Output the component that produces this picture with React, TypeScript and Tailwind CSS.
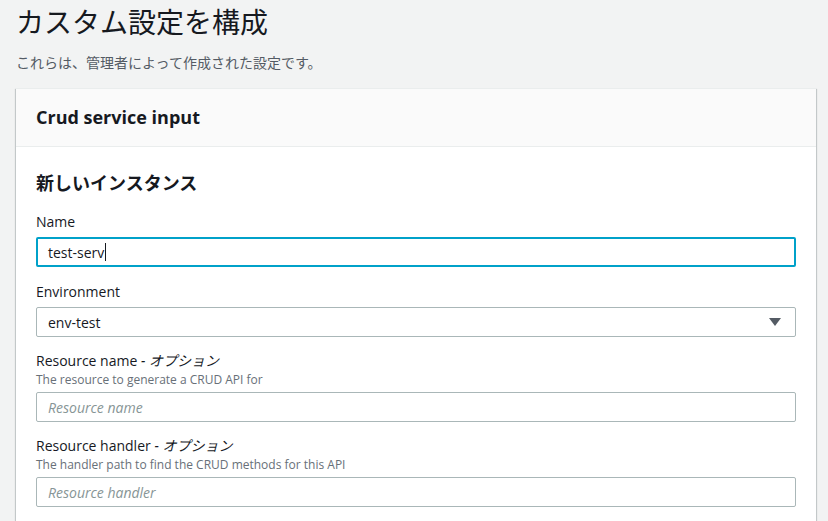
import React from 'react';

const font = { fontFamily: '"Open Sans", "Noto Sans CJK JP", sans-serif' };

function Field({
  label,
  optional,
  description,
  children,
}: {
  label: string;
  optional?: boolean;
  description?: string;
  children: React.ReactNode;
}) {
  return (
    <div className="flex flex-col">
      <label className="text-[14px] leading-[22px] text-[#16191f]">
        {label}
        {optional && <span className="italic"> - オプション</span>}
      </label>
      {description && <p className="text-[12px] leading-[16px] text-[#687078]">{description}</p>}
      <div className="mt-[4px]">{children}</div>
    </div>
  );
}

export default function App() {
  return (
    <div className="min-h-screen bg-[#f2f3f3] px-[16px] pt-[2px] text-[#16191f]" style={font}>
      <h1 className="text-[28px] leading-[40px] font-normal">カスタム設定を構成</h1>
      <p className="mt-[10px] text-[14px] leading-[22px] text-[#545b64]">これらは、管理者によって作成された設定です。</p>
      <div className="mt-[14px] w-[800px] border-t border-[#eaeded] bg-white shadow-[0_1px_1px_0_rgba(0,28,36,0.3),1px_1px_1px_0_rgba(0,28,36,0.15),-1px_1px_1px_0_rgba(0,28,36,0.15)]">
        <div className="flex h-[58px] items-center border-b border-[#eaeded] bg-[#fafafa] px-[20px]">
          <h2 className="text-[18px] font-bold">Crud service input</h2>
        </div>
        <div className="flex flex-col px-[20px] pt-[22px] pb-[20px]">
          <h3 className="mb-[14px] text-[18px] leading-[28px] font-bold">新しいインスタンス</h3>
          <div className="flex flex-col gap-[13px]">
            <div className="pb-[1px]">
              <Field label="Name">
                <div className="flex h-[30px] items-center rounded-[2px] border-2 border-[#00a1c9] px-[10px] text-[14px]">
                  test-serv<span className="ml-px inline-block h-[18px] w-px bg-[#16191f]" />
                </div>
              </Field>
            </div>
            <Field label="Environment">
              <div className="flex h-[30px] items-center justify-between rounded-[2px] border border-[#aab7b8] pl-[11px] pr-[14px] text-[14px]">
                <span>env-test</span>
                <svg width="12" height="10" viewBox="0 0 12 10">
                  <path d="M0 1h12L6 9z" fill="#545b64" />
                </svg>
              </div>
            </Field>
            <Field label="Resource name" optional description="The resource to generate a CRUD API for">
              <div className="flex h-[30px] items-center rounded-[2px] border border-[#aab7b8] px-[11px] text-[14px] italic text-[#879596]">
                Resource name
              </div>
            </Field>
            <Field label="Resource handler" optional description="The handler path to find the CRUD methods for this API">
              <div className="flex h-[30px] items-center rounded-[2px] border border-[#aab7b8] px-[11px] text-[14px] italic text-[#879596]">
                Resource handler
              </div>
            </Field>
          </div>
        </div>
      </div>
    </div>
  );
}
